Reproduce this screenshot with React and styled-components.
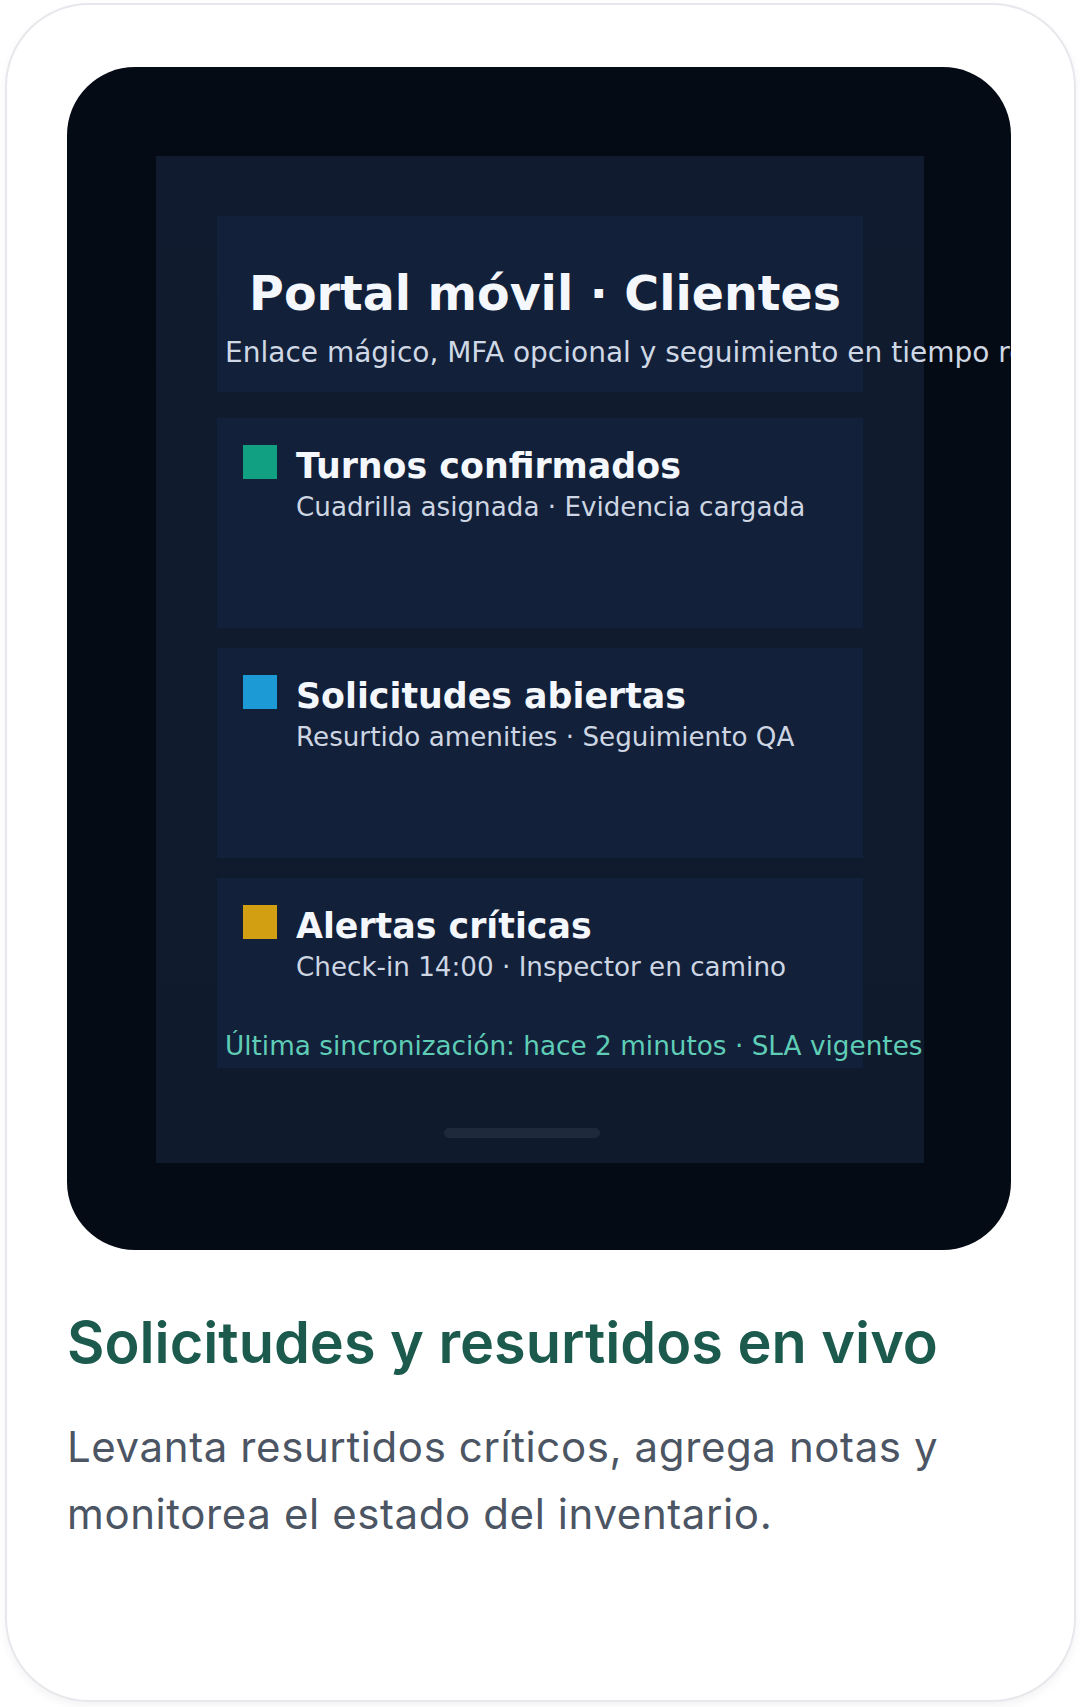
import React from "react";
import styled, { createGlobalStyle } from "styled-components";

const GlobalStyle = createGlobalStyle`
  html, body {
    margin: 0;
    padding: 0;
    background: #ffffff;
  }
  * {
    box-sizing: border-box;
  }
`;

const rows = [
  {
    color: "#12a082",
    title: "Turnos confirmados",
    detail: "Cuadrilla asignada · Evidencia cargada",
  },
  {
    color: "#1c9ad6",
    title: "Solicitudes abiertas",
    detail: "Resurtido amenities · Seguimiento QA",
  },
  {
    color: "#d29f12",
    title: "Alertas críticas",
    detail: "Check-in 14:00 · Inspector en camino",
    footer: "Última sincronización: hace 2 minutos · SLA vigentes",
  },
];

function App() {
  return (
    <Page>
      <GlobalStyle />
      <FeatureCard>
        <DeviceFrame>
          <Screen>
            <HeaderPanel>
              <ScreenTitle>Portal móvil · Clientes</ScreenTitle>
              <ScreenSubtitle>
                Enlace mágico, MFA opcional y seguimiento en tiempo real
              </ScreenSubtitle>
            </HeaderPanel>

            <RowList>
              {rows.map((row) => (
                <StatusCard key={row.title} $short={!!row.footer}>
                  <StatusRow>
                    <Marker $color={row.color} />
                    <StatusText>
                      <StatusTitle>{row.title}</StatusTitle>
                      <StatusDetail>{row.detail}</StatusDetail>
                    </StatusText>
                  </StatusRow>
                  {row.footer && <SyncNote>{row.footer}</SyncNote>}
                </StatusCard>
              ))}
            </RowList>

            <HomeBar />
          </Screen>
        </DeviceFrame>

        <Heading>Solicitudes y resurtidos en vivo</Heading>
        <Description>
          Levanta resurtidos críticos, agrega notas y monitorea el estado del
          inventario.
        </Description>
      </FeatureCard>
    </Page>
  );
}

export default App;

const Page = styled.div`
  padding: 3px 4px 5px 5px;
`;

const FeatureCard = styled.section`
  width: 1071px;
  height: 1699px;
  background: #ffffff;
  border: 2px solid #e6e8ec;
  border-radius: 84px;
  padding: 62px 60px;
  box-shadow: 0 4px 10px rgba(15, 23, 42, 0.05);
  display: flex;
  flex-direction: column;
`;

const DeviceFrame = styled.div`
  width: 944px;
  height: 1183px;
  background: #050b14;
  border-radius: 68px;
  padding: 89px 87px 87px 89px;
  overflow: hidden;
`;

const Screen = styled.div`
  width: 768px;
  height: 1007px;
  background: linear-gradient(180deg, #101b2f 0%, #0f1a2c 100%);
  padding: 60px 61px 0 61px;
  display: flex;
  flex-direction: column;
  font-family: "DejaVu Sans", "Liberation Sans", sans-serif;
`;

const HeaderPanel = styled.div`
  background: #12203a;
  height: 176px;
  padding: 50px 8px 0 8px;
  display: flex;
  flex-direction: column;
`;

const ScreenTitle = styled.h1`
  margin: 0 0 0 10px;
  font-size: 47.5px;
  line-height: 56px;
  font-weight: 700;
  color: #f4f7fb;
  text-align: center;
  white-space: nowrap;
`;

const ScreenSubtitle = styled.p`
  margin: 14px 0 0 0;
  font-size: 28px;
  line-height: 34px;
  color: #cfd8e4;
  white-space: nowrap;
`;

const RowList = styled.div`
  margin-top: 26px;
  display: flex;
  flex-direction: column;
  gap: 20px;
`;

const StatusCard = styled.div`
  background: #12203a;
  height: ${(p) => (p.$short ? "190px" : "210px")};
  padding: 27px 8px 0 8px;
  display: flex;
  flex-direction: column;
`;

const StatusRow = styled.div`
  display: flex;
  align-items: flex-start;
  gap: 19px;
  padding-left: 18px;
`;

const Marker = styled.span`
  width: 34px;
  height: 34px;
  flex: none;
  background: ${(p) => p.$color};
`;

const StatusText = styled.div`
  padding-top: 1px;
  display: flex;
  flex-direction: column;
`;

const StatusTitle = styled.span`
  font-size: 34.8px;
  line-height: 41px;
  font-weight: 700;
  color: #f4f7fb;
  white-space: nowrap;
`;

const StatusDetail = styled.span`
  margin-top: 4px;
  font-size: 26.2px;
  line-height: 32px;
  color: #cdd6e2;
  white-space: nowrap;
`;

const SyncNote = styled.span`
  margin-top: 47px;
  font-size: 26.3px;
  line-height: 32px;
  color: #5fcdb6;
  white-space: nowrap;
`;

const HomeBar = styled.div`
  width: 156px;
  height: 10px;
  margin: 60px 0 0 227px;
  border-radius: 5px;
  background: #1e293b;
`;

const Heading = styled.h2`
  margin: 58px 0 0 0;
  font-family: Inter, "Liberation Sans", sans-serif;
  font-size: 57.6px;
  line-height: 68px;
  font-weight: 600;
  color: #1b5a4d;
`;

const Description = styled.p`
  margin: 37px 0 0 0;
  font-family: Inter, "Liberation Sans", sans-serif;
  font-size: 42px;
  line-height: 67px;
  letter-spacing: 0.6px;
  color: #4b5563;
`;
